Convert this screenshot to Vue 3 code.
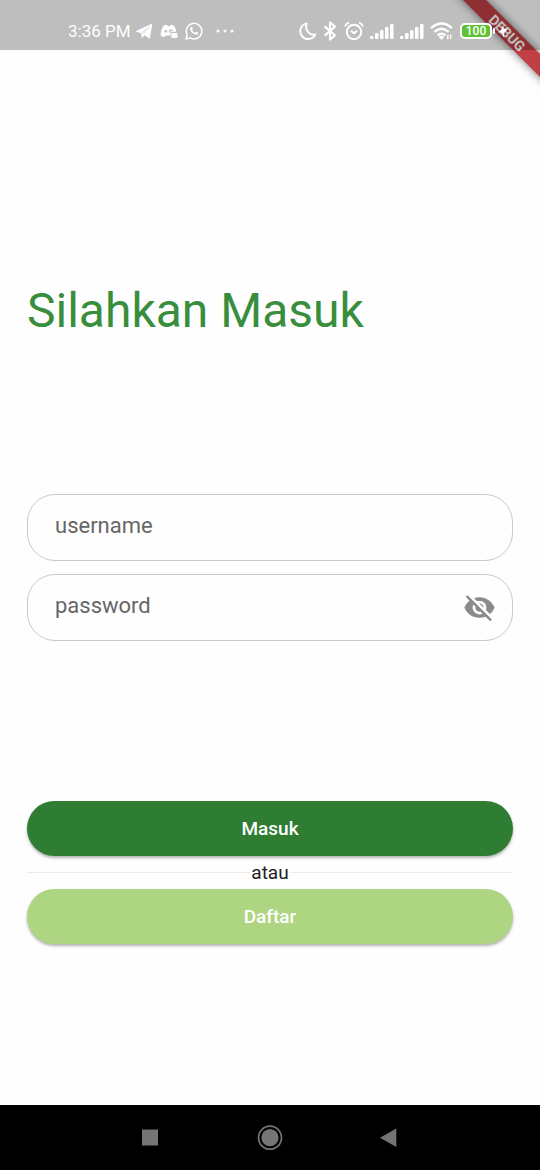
<script setup>
import { ref } from 'vue'

const username = ref('')
const password = ref('')
const hidden = ref(true)
const bars = [3, 6, 9, 12, 15]
</script>

<template>
  <div class="screen">
    <header class="status">
      <div class="group">
        <span class="time">3:36 PM</span>
        <svg class="telegram" width="18" height="18" viewBox="0 0 18 18" aria-hidden="true">
          <path d="M0.5 9.2 17.4 1.6 14.8 16.8 9.6 13.3 7 16 5.8 11.2Z" fill="#fff" />
          <path d="M6.4 11.2 14 5.2 7.8 12.2" fill="none" stroke="#d2d2d2" stroke-width=".8" />
        </svg>
        <svg class="discord" width="18" height="18" viewBox="0 0 18 18" aria-hidden="true">
          <path d="M4.2 3.3 7 2.8 7.6 4H10.2L10.9 2.8 13.7 3.4C15.3 5.5 16 7.5 16 9.7H10.6V13.5H6.8L5 13.7 4.1 15.3C2.6 15 1.4 14.4.6 13.5 .6 9.5 1.8 5.7 4.2 3.3Z" fill="#fff" />
          <ellipse cx="5.8" cy="9.3" rx="1.3" ry="1.5" fill="#bfbfbf" />
          <path d="M9.4 10.6V9.2Q9.6 7.7 11 7.8L12.4 9.4" fill="none" stroke="#bfbfbf" stroke-width="1.2" />
          <rect x="11.4" y="10.9" width="6" height="5.2" rx="1" fill="#fff" />
        </svg>
        <svg class="whatsapp" width="18" height="18" viewBox="0 0 18 18" aria-hidden="true">
          <path d="M1 17 2.2 12.9A7.8 7.8 0 1 1 5.1 15.9Z" fill="none" stroke="#fff" stroke-width="1.5" stroke-linejoin="round" />
          <path d="M5.2 5.8C5.8 4.7 6.7 4.6 7.1 5.2L7.9 7Q7.9 7.6 7.1 8.3 8 10 9.9 10.8L10.9 9.8Q11.3 9.6 13 10.6 13.5 11 12.8 12.1C11.6 13.3 9.6 12.7 7.6 11.1 5.6 9.4 4.5 7.2 5.2 5.8Z" fill="#fff" />
        </svg>
        <svg class="dots" width="20" height="4" viewBox="0 0 20 4" aria-hidden="true">
          <circle cx="2" cy="2" r="1.5" fill="#fff" /><circle cx="9" cy="2" r="1.5" fill="#fff" /><circle cx="16" cy="2" r="1.5" fill="#fff" />
        </svg>
      </div>
      <div class="group">
        <svg width="18" height="20" viewBox="0 0 18 20" aria-hidden="true">
          <path d="M7.6 2.4A7.9 7.9 0 1 0 16.4 13.4C11 15.4 5.4 9 7.6 2.4Z" fill="none" stroke="#fff" stroke-width="1.9" stroke-linejoin="round" />
        </svg>
        <svg class="bluetooth" width="14" height="20" viewBox="0 0 14 20" aria-hidden="true">
          <path d="M1.6 5.4 12 14.4 7 18.6V1.4L12 5.6 1.6 14.6" fill="none" stroke="#fff" stroke-width="2.1" stroke-linejoin="round" />
        </svg>
        <svg class="alarm" width="20" height="20" viewBox="0 0 20 20" aria-hidden="true">
          <circle cx="10" cy="11" r="7.2" fill="none" stroke="#fff" stroke-width="2" />
          <path d="M.9 5.4Q2 2.7 5 1.6M19.1 5.4Q18 2.7 15 1.6M7 9.7 10 12.2 13 9.7" fill="none" stroke="#fff" stroke-width="1.9" />
        </svg>
        <svg v-for="n in 2" :key="n" class="signal" width="24" height="18" viewBox="0 0 24 18" aria-hidden="true">
          <rect v-for="(h, i) in bars" :key="i" :x="i * 5" :y="17 - h" width="3.5" :height="h" rx="1.2" fill="#fff" />
        </svg>
        <svg class="wifi" width="24" height="20" viewBox="0 0 24 20" aria-hidden="true">
          <path d="M1 7.2Q11.5-2.3 22 7.2M4.3 11Q11.5 4.4 18.7 11M7.6 14.4Q11.5 11 15.4 14.4" fill="none" stroke="#fff" stroke-width="2.3" />
          <path d="M8.6 15.8Q11.5 13.6 14.4 15.8L11.5 19Z" fill="#fff" />
          <path d="M17.8 18.5V14M20.6 13.6V18" stroke="#fff" stroke-width="1.4" />
        </svg>
        <span class="battery">100</span>
        <svg class="bolt" width="10" height="14" viewBox="0 0 10 14" aria-hidden="true">
          <path d="M5.2.6 5.8 4.8 9.6 5 6.6 8.2 5.6 13.4 4.2 9 .4 8.6 3.4 5.6Z" fill="#fff" />
        </svg>
      </div>
    </header>

    <svg class="debug" width="100" height="100" viewBox="0 0 100 100">
      <path class="band" d="M15-8 38-8 108 62V85Z" />
      <text x="67" y="33" transform="rotate(45 67 33)" dy="5" text-anchor="middle">DEBUG</text>
    </svg>

    <main>
      <h1>Silahkan Masuk</h1>
      <form @submit.prevent>
        <div class="fields">
          <div class="field">
            <input v-model="username" type="text" placeholder="username" aria-label="username" />
          </div>
          <div class="field">
            <input v-model="password" :type="hidden ? 'password' : 'text'" placeholder="password" aria-label="password" />
            <button class="eye" type="button" aria-label="Tampilkan password" @click="hidden = !hidden">
              <svg width="33" height="33" viewBox="0 0 24 24" aria-hidden="true">
                <path fill="#8a8a8a" d="M12 7c2.76 0 5 2.24 5 5 0 .65-.13 1.26-.36 1.83l2.92 2.92c1.51-1.26 2.7-2.89 3.43-4.75-1.73-4.39-6-7.5-11-7.5-1.4 0-2.74.25-3.98.7l2.16 2.16C10.74 7.13 11.35 7 12 7zM2 4.27l2.28 2.28.46.46C3.08 8.3 1.78 10.02 1 12c1.73 4.39 6 7.5 11 7.5 1.55 0 3.03-.3 4.38-.84l.42.42L19.73 22 21 20.73 3.27 3 2 4.27zM7.53 9.8l1.55 1.55c-.05.21-.08.43-.08.65 0 1.66 1.34 3 3 3 .22 0 .44-.03.65-.08l1.55 1.55c-.67.33-1.41.53-2.2.53-2.76 0-5-2.24-5-5 0-.79.2-1.53.53-2.2zm4.31-.78l3.15 3.15.02-.16c0-1.66-1.34-3-3-3l-.17.01z" />
              </svg>
            </button>
          </div>
        </div>
        <button class="action login" type="submit">Masuk</button>
        <div class="or"><span>atau</span></div>
        <button class="action register" type="button">Daftar</button>
      </form>
    </main>

    <nav>
      <button type="button" aria-label="Recent apps">
        <svg width="28" height="28" viewBox="0 0 28 28"><rect x="6" y="5.5" width="16" height="16" fill="#757575" /></svg>
      </button>
      <button type="button" aria-label="Home">
        <svg width="28" height="28" viewBox="0 0 28 28">
          <circle cx="14" cy="13.7" r="11.5" fill="none" stroke="#757575" stroke-width="1.7" />
          <circle cx="14" cy="13.7" r="8.6" fill="#757575" />
        </svg>
      </button>
      <button type="button" aria-label="Back">
        <svg width="28" height="28" viewBox="0 0 28 28"><path d="M4 13.7 20.3 4.5V23Z" fill="#757575" /></svg>
      </button>
    </nav>
  </div>
</template>

<style>
body {
  margin: 0;
  background: #fefefe;
}
</style>

<style scoped>
.screen {
  position: relative;
  display: flex;
  flex-direction: column;
  min-height: 100vh;
  background: #fefefe;
  font-family: Roboto, "Liberation Sans", sans-serif;
}
svg {
  display: block;
  flex: none;
}
button {
  margin: 0;
  padding: 0;
  border: 0;
  background: none;
  font: inherit;
}
.status {
  position: relative;
  z-index: 2;
  display: flex;
  justify-content: space-between;
  height: 50px;
  padding: 12px 32px 0 68px;
  box-sizing: border-box;
  background: rgba(0, 0, 0, 0.25);
  color: #fff;
}
.group {
  display: flex;
  align-items: center;
  height: 38px;
}
.time {
  font-size: 17px;
  line-height: 20px;
}
.telegram {
  margin-left: 4px;
}
.discord,
.whatsapp {
  margin-left: 7px;
}
.dots {
  margin-left: 13px;
}
.bluetooth {
  margin-left: 6px;
}
.alarm {
  margin-left: 7px;
}
.signal,
.wifi {
  margin-left: 6px;
}
.battery {
  position: relative;
  width: 32px;
  height: 16px;
  margin-left: 6px;
  box-sizing: border-box;
  border: 2px solid #fff;
  border-radius: 5px;
  background: #5fc234;
  font-size: 12px;
  font-weight: 500;
  line-height: 12px;
  text-align: center;
}
.battery::after {
  content: "";
  position: absolute;
  top: 3px;
  right: -5px;
  width: 2px;
  height: 6px;
  border-radius: 1px;
  background: #fff;
}
.bolt {
  margin-left: 6px;
}
.debug {
  position: absolute;
  z-index: 1;
  top: 0;
  right: 0;
  overflow: hidden;
  pointer-events: none;
}
.band {
  fill: #bf3f44;
  filter: drop-shadow(0 0 5px rgba(0, 0, 0, 0.55));
}
.debug text {
  fill: #fff;
  font-size: 14px;
  font-weight: 700;
}
main {
  flex: 1;
  padding: 233px 27px 0;
}
h1 {
  margin: 0 0 155px;
  color: #388e3c;
  font-size: 48px;
  font-weight: 400;
  line-height: 56px;
}
.fields {
  display: flex;
  flex-direction: column;
  gap: 13px;
  margin-bottom: 160px;
}
.field {
  display: flex;
  align-items: center;
  height: 67px;
  box-sizing: border-box;
  border: 1px solid #c8c8c8;
  border-radius: 28px;
  padding: 0 16px 0 27px;
}
input {
  flex: 1;
  min-width: 0;
  height: 100%;
  padding: 0 0 4px;
  border: 0;
  outline: 0;
  background: none;
  color: #212121;
  font: 400 22px Roboto, "Liberation Sans", sans-serif;
}
input::placeholder {
  color: #666;
  opacity: 1;
}
.action {
  display: block;
  width: 100%;
  height: 55px;
  border-radius: 28px;
  color: #fff;
  font-size: 19px;
  font-weight: 500;
  box-shadow: 0 2px 3px rgba(0, 0, 0, 0.3);
}
.login {
  background: #2e7d32;
}
.register {
  background: #aed581;
}
.or {
  display: flex;
  align-items: center;
  height: 33px;
  color: #212121;
  font-size: 19px;
  line-height: 22px;
}
.or::before,
.or::after {
  content: "";
  flex: 1;
  height: 1px;
  background: #ebebeb;
}
.or span {
  padding: 0 1px;
}
nav {
  display: flex;
  align-items: center;
  justify-content: center;
  gap: 92px;
  height: 65px;
  background: #000;
}
</style>
